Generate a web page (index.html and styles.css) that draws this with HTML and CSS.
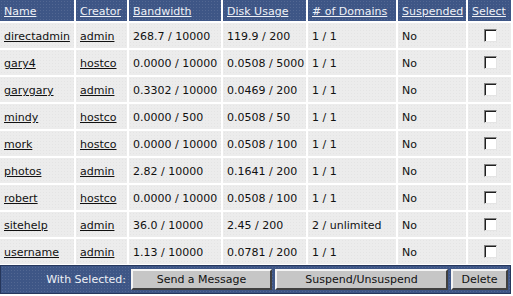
FILE: index.html
```html
<!DOCTYPE html>
<html>
<head>
<meta charset="utf-8">
<link rel="stylesheet" href="styles.css">
</head>
<body>
<table class="users">
  <thead>
    <tr>
      <th class="c-name"><a href="#">Name</a></th>
      <th class="c-creator"><a href="#">Creator</a></th>
      <th class="c-bw"><a href="#">Bandwidth</a></th>
      <th class="c-disk"><a href="#">Disk Usage</a></th>
      <th class="c-dom"><a href="#"># of Domains</a></th>
      <th class="c-susp"><a href="#">Suspended</a></th>
      <th class="c-sel"><a href="#">Select</a></th>
    </tr>
  </thead>
  <tbody>
    <tr><td><a href="#">directadmin</a></td><td><a href="#">admin</a></td><td>268.7 / 10000</td><td>119.9 / 200</td><td>1 / 1</td><td>No</td><td class="sel"><span class="box"></span></td></tr>
    <tr><td><a href="#">gary4</a></td><td><a href="#">hostco</a></td><td>0.0000 / 10000</td><td>0.0508 / 5000</td><td>1 / 1</td><td>No</td><td class="sel"><span class="box"></span></td></tr>
    <tr><td><a href="#">garygary</a></td><td><a href="#">admin</a></td><td>0.3302 / 10000</td><td>0.0469 / 200</td><td>1 / 1</td><td>No</td><td class="sel"><span class="box"></span></td></tr>
    <tr><td><a href="#">mindy</a></td><td><a href="#">hostco</a></td><td>0.0000 / 500</td><td>0.0508 / 50</td><td>1 / 1</td><td>No</td><td class="sel"><span class="box"></span></td></tr>
    <tr><td><a href="#">mork</a></td><td><a href="#">hostco</a></td><td>0.0000 / 10000</td><td>0.0508 / 100</td><td>1 / 1</td><td>No</td><td class="sel"><span class="box"></span></td></tr>
    <tr><td><a href="#">photos</a></td><td><a href="#">admin</a></td><td>2.82 / 10000</td><td>0.1641 / 200</td><td>1 / 1</td><td>No</td><td class="sel"><span class="box"></span></td></tr>
    <tr><td><a href="#">robert</a></td><td><a href="#">hostco</a></td><td>0.0000 / 10000</td><td>0.0508 / 100</td><td>1 / 1</td><td>No</td><td class="sel"><span class="box"></span></td></tr>
    <tr><td><a href="#">sitehelp</a></td><td><a href="#">admin</a></td><td>36.0 / 10000</td><td>2.45 / 200</td><td>2 / unlimited</td><td>No</td><td class="sel"><span class="box"></span></td></tr>
    <tr><td><a href="#">username</a></td><td><a href="#">admin</a></td><td>1.13 / 10000</td><td>0.0781 / 200</td><td>1 / 1</td><td>No</td><td class="sel"><span class="box"></span></td></tr>
  </tbody>
</table>
<div class="actions">
  <span class="label">With Selected:</span>
  <button class="btn btn-msg">Send a Message</button>
  <button class="btn btn-susp">Suspend/Unsuspend</button>
  <button class="btn btn-del">Delete</button>
</div>
</body>
</html>
```
FILE: styles.css
```css
html, body {
  margin: 0;
  padding: 0;
  background: #ffffff;
  overflow: hidden;
}

body {
  font-family: "DejaVu Sans", Verdana, sans-serif;
  font-size: 11px;
  color: #111111;
}

/* user list: white 2px gutters between cells, flush with the page edge */
.users {
  border-collapse: separate;
  border-spacing: 2px;
  table-layout: fixed;
  width: 515px;
  margin: -2px 0 0 -2px;
}

.c-name { width: 74px; }
.c-creator { width: 51px; }
.c-bw { width: 92px; }
.c-disk { width: 83px; }
.c-dom { width: 88px; }
.c-susp { width: 68px; }
.c-sel { width: 43px; }

.users th,
.users td {
  box-sizing: border-box;
  text-align: left;
  white-space: nowrap;
  overflow: hidden;
  vertical-align: middle;
}

.users th {
  height: 21px;
  padding: 1px 0 0 4px;
  font-weight: normal;
  background-color: #3e5686;
  background-image: radial-gradient(circle, rgba(255, 255, 255, 0.10) 0.7px, transparent 0.9px);
  background-size: 3px 3px;
}

.users th a {
  color: #eef1f7;
}

.users td {
  height: 25px;
  padding: 2px 0 0 4px;
  background-color: #ececec;
  background-image: radial-gradient(circle, rgba(0, 0, 0, 0.035) 0.7px, transparent 0.9px);
  background-size: 3px 3px;
}

.users td a {
  color: #111111;
}

.users td.sel {
  text-align: center;
  padding: 0 0 0 2px;
}

/* classic sunken checkbox */
.box {
  display: inline-block;
  box-sizing: border-box;
  width: 13px;
  height: 13px;
  background: #ffffff;
  border-style: solid;
  border-width: 1px;
  border-color: #808080 #e4e4e4 #e4e4e4 #808080;
  box-shadow: inset 1px 1px 0 #202020;
  vertical-align: middle;
}

/* bulk action bar under the list */
.actions {
  display: flex;
  align-items: center;
  box-sizing: border-box;
  width: 511px;
  height: 29px;
  margin-top: -1px;
  background-color: #3e5686;
  background-image: radial-gradient(circle, rgba(255, 255, 255, 0.10) 0.7px, transparent 0.9px);
  background-size: 3px 3px;
  border: 1px solid #26375c;
}

.actions .label {
  box-sizing: border-box;
  width: 129px;
  padding-right: 4px;
  text-align: right;
  color: #eef1f7;
}

.btn {
  box-sizing: border-box;
  font-family: inherit;
  font-size: 11px;
  color: #111111;
  background: #c6c6c6;
  height: 21px;
  padding: 0;
  margin: 0 0 0 1px;
  border-style: solid;
  border-width: 2px;
  border-color: #f4f4f4 #404040 #404040 #f4f4f4;
}

.btn-msg { width: 141px; }
.btn-susp { width: 173px; margin-left: 3px; }
.btn-del { width: 57px; margin-left: 3px; }
```
